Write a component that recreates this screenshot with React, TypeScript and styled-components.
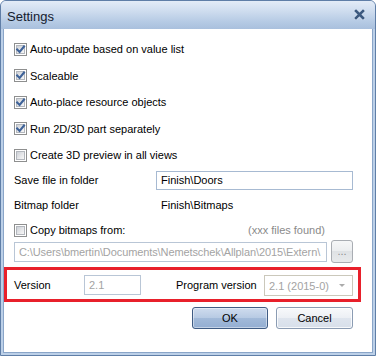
import styled, { createGlobalStyle } from 'styled-components';

const GlobalStyle = createGlobalStyle`
  html, body {
    margin: 0;
    padding: 0;
    background: #ffffff;
  }
  body {
    font-family: "Liberation Sans", Arial, sans-serif;
    font-size: 11px;
    color: #000000;
  }
`;

const Window = styled.div`
  width: 376px;
  height: 356px;
  box-sizing: border-box;
  display: flex;
  flex-direction: column;
  border: 1px solid #5f7ea7;
  border-radius: 6px 6px 0 0;
  background: #bcd0e8;
  overflow: hidden;
`;

const TitleBar = styled.div`
  height: 28px;
  flex: none;
  display: flex;
  align-items: center;
  justify-content: space-between;
  padding: 0 10px 0 6px;
  background: linear-gradient(#e3ecf7 0%, #cfddef 35%, #b5cae4 75%, #a9c0dd 100%);
`;

const Title = styled.span`
  font-size: 13px;
  color: #14202f;
  padding-top: 2px;
`;

const CloseIcon = styled.svg`
  width: 11px;
  height: 11px;
  margin-top: -1px;
`;

const Body = styled.div`
  flex: 1;
  margin: 0 2px 2px 2px;
  border: 1px solid #8aa5c8;
  border-top: none;
  background: #ffffff;
  padding: 6.75px 19px 0 10px;
  display: flex;
  flex-direction: column;
`;

const CheckRow = styled.label<{ $h?: number; $mt?: number }>`
  height: ${(p) => p.$h ?? 26.5}px;
  margin-top: ${(p) => p.$mt ?? 0}px;
  display: flex;
  align-items: center;
  gap: 3px;
`;

const Box = styled.span`
  width: 13px;
  height: 13px;
  box-sizing: border-box;
  border: 1px solid #8e8f8f;
  background: #ffffff;
  padding: 1px;
  display: flex;
  flex: none;
  position: relative;
`;

const BoxInner = styled.span`
  flex: 1;
  border: 1px solid #b3b7bd;
  background: linear-gradient(135deg, #cdd1d7 0%, #e8e9eb 60%, #f7f7f7 100%);
`;

const Tick = styled.svg`
  position: absolute;
  left: 0;
  top: 0;
  width: 11px;
  height: 11px;
`;

const Found = styled.span`
  margin-left: auto;
  margin-right: 28px;
  color: #8a8a8a;
`;

const FieldRow = styled.div<{ $h: number; $mt: number }>`
  height: ${(p) => p.$h}px;
  margin-top: ${(p) => p.$mt}px;
  display: grid;
  grid-template-columns: 142px 1fr;
  align-items: center;
`;

const Value = styled.span`
  padding-left: 5px;
`;

const TextBox = styled.div<{ $disabled?: boolean; $w?: number; $tight?: boolean }>`
  height: ${(p) => (p.$disabled ? 20 : 19)}px;
  width: ${(p) => (p.$w ? `${p.$w}px` : 'auto')};
  box-sizing: border-box;
  border: 1px solid ${(p) => (p.$disabled ? '#b9c6d6' : '#a7bad2')};
  color: ${(p) => (p.$disabled ? '#a3a3a3' : '#000000')};
  padding-left: 4px;
  letter-spacing: ${(p) => (p.$tight ? '-0.1px' : 'normal')};
  display: flex;
  align-items: center;
  white-space: nowrap;
  overflow: hidden;
  flex: ${(p) => (p.$w ? 'none' : 1)};
`;

const PathRow = styled.div`
  height: 23px;
  display: flex;
  align-items: center;
  gap: 4px;
`;

const BrowseButton = styled.div`
  width: 22px;
  height: 23px;
  box-sizing: border-box;
  border: 1px solid #a9adb3;
  border-radius: 3px;
  background: linear-gradient(#f6f7f8, #ebedef 50%, #dfe2e5 50%, #e8eaec);
  color: #8c8c8c;
  display: flex;
  align-items: flex-end;
  justify-content: center;
  padding-bottom: 5px;
  font-size: 11px;
  line-height: 1;
`;

const Highlight = styled.div`
  height: 35px;
  box-sizing: border-box;
  margin: 4px -8px 0 -10px;
  border: 3px solid #e8202b;
  padding: 0 5px 0 7px;
  display: flex;
  align-items: center;
`;

const Label = styled.span<{ $w: number; $ml?: number }>`
  width: ${(p) => p.$w}px;
  margin-left: ${(p) => p.$ml ?? 0}px;
  flex: none;
`;

const Select = styled.div`
  width: 89px;
  height: 21px;
  box-sizing: border-box;
  border: 1px solid #cbc8bb;
  color: #a3a3a3;
  padding-left: 4px;
  display: flex;
  align-items: center;
  justify-content: space-between;
  margin-top: 2px;
`;

const Arrow = styled.span`
  width: 0;
  height: 0;
  border-left: 3px solid transparent;
  border-right: 3px solid transparent;
  border-top: 3px solid #ababab;
  margin-right: 7px;
`;

const Buttons = styled.div`
  margin-top: 5px;
  display: flex;
  justify-content: flex-end;
  gap: 8px;
`;

const Button = styled.div<{ $primary?: boolean; $w: number }>`
  width: ${(p) => p.$w}px;
  height: 22px;
  box-sizing: border-box;
  border-radius: 3px;
  border: 1px solid ${(p) => (p.$primary ? '#3f5c84' : '#8b9cb3')};
  box-shadow: inset 0 0 0 1px ${(p) => (p.$primary ? 'rgba(255,255,255,0.45)' : 'rgba(255,255,255,0.8)')};
  background: ${(p) =>
    p.$primary
      ? 'linear-gradient(#cfdcee, #b7cae3 50%, #a2bad9 50%, #93aed2)'
      : 'linear-gradient(#f8f9fb, #eceff4 50%, #dfe5ee 50%, #d7dfea)'};
  display: flex;
  align-items: center;
  justify-content: center;
`;

const Checkbox = ({ checked }: { checked?: boolean }) => (
  <Box>
    <BoxInner />
    {checked && (
      <Tick viewBox="0 0 11 11">
        <path
          d="M2.2 5.6 L4.6 8 L9 2.6"
          fill="none"
          stroke="#3f6399"
          strokeWidth="2.1"
          strokeLinecap="square"
        />
      </Tick>
    )}
  </Box>
);

const checks: { text: string; checked: boolean }[] = [
  { text: 'Auto-update based on value list', checked: true },
  { text: 'Scaleable', checked: true },
  { text: 'Auto-place resource objects', checked: true },
  { text: 'Run 2D/3D part separately', checked: true },
  { text: 'Create 3D preview in all views', checked: false },
];

export default function App() {
  return (
    <>
      <GlobalStyle />
      <Window>
        <TitleBar>
          <Title>Settings</Title>
          <CloseIcon viewBox="0 0 11 11">
            <path
              d="M2 2 L9 9 M9 2 L2 9"
              stroke="#dbe6f3"
              strokeWidth="4.2"
              strokeLinecap="square"
              opacity="0.6"
            />
            <path d="M2 2 L9 9 M9 2 L2 9" stroke="#3d5a80" strokeWidth="2.6" strokeLinecap="square" />
          </CloseIcon>
        </TitleBar>
        <Body>
          {checks.map((c) => (
            <CheckRow key={c.text}>
              <Checkbox checked={c.checked} />
              {c.text}
            </CheckRow>
          ))}
          <FieldRow $h={19} $mt={2.5}>
            <span>Save file in folder</span>
            <TextBox>Finish\Doors</TextBox>
          </FieldRow>
          <FieldRow $h={20} $mt={5.25}>
            <span>Bitmap folder</span>
            <Value>Finish\Bitmaps</Value>
          </FieldRow>
          <CheckRow $h={20} $mt={5}>
            <Checkbox />
            Copy bitmaps from:
            <Found>(xxx files found)</Found>
          </CheckRow>
          <PathRow>
            <TextBox $disabled $tight>
              C:\Users\bmertin\Documents\Nemetschek\Allplan\2015\Extern\
            </TextBox>
            <BrowseButton>...</BrowseButton>
          </PathRow>
          <Highlight>
            <Label $w={70}>Version</Label>
            <TextBox $disabled $w={57}>
              2.1
            </TextBox>
            <Label $w={88} $ml={35}>
              Program version
            </Label>
            <Select>
              2.1 (2015-0)
              <Arrow />
            </Select>
          </Highlight>
          <Buttons>
            <Button $primary $w={76}>
              OK
            </Button>
            <Button $w={77}>Cancel</Button>
          </Buttons>
        </Body>
      </Window>
    </>
  );
}
